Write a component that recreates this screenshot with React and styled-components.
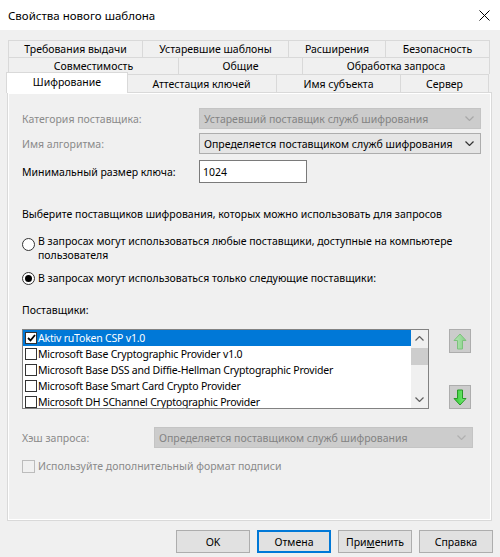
import React from 'react'
import styled, { createGlobalStyle } from 'styled-components'

const GlobalStyle = createGlobalStyle`
  html, body {
    margin: 0;
    padding: 0;
    background: #f0f0f0;
  }
  body {
    font-family: "Noto Sans", "Open Sans", sans-serif;
    font-size: 10.5px;
    color: #000;
  }
  * { box-sizing: border-box; }
`

const Window = styled.div`
  width: 500px;
  height: 557px;
  background: #f0f0f0;
  display: flex;
  flex-direction: column;
  overflow: hidden;
`
const TitleBar = styled.div`
  height: 30px;
  flex-shrink: 0;
  background: #fff;
  display: flex;
  align-items: center;
  justify-content: space-between;
  padding: 0 10px 0 8px;
`
const Caption = styled.span`
  font-size: 11.5px;
`
const TabStrip = styled.div`
  margin-top: 10px;
  display: flex;
  flex-direction: column;
`
const TabRow = styled.div`
  display: flex;
  height: ${p => p.$h}px;
  padding-left: 8px;
`
const Tab = styled.div`
  width: ${p => p.$w}px;
  height: 100%;
  flex-shrink: 0;
  border: 1px solid #d9d9d9;
  border-bottom: none;
  margin-left: -1px;
  display: flex;
  align-items: center;
  justify-content: center;
  white-space: nowrap;
  background: #f0f0f0;
  &:first-child { margin-left: 0; }
`
const ActiveTab = styled(Tab)`
  position: relative;
  z-index: 1;
  width: 122px;
  height: 21px;
  margin-left: -2px;
  margin-top: -2px;
  background: #fff;
  padding-bottom: 3px;
  &:first-child { margin-left: -2px; }
`
const Panel = styled.div`
  margin-left: 7px;
  width: 485px;
  height: 429px;
  border: 1px solid #d9d9d9;
  box-shadow: inset 0 0 0 1px #fff;
  background: #f0f0f0;
  padding: 15px 10px 0 14px;
  display: flex;
  flex-direction: column;
`
const FieldRow = styled.div`
  display: grid;
  grid-template-columns: ${p => p.$label || 177}px auto;
  align-items: center;
  margin-top: ${p => p.$mt || 0}px;
`
const Label = styled.span`
  color: ${p => (p.$disabled ? '#8a8a8a' : '#000')};
  white-space: nowrap;
`
const Combo = styled.div`
  width: ${p => p.$w}px;
  height: 21px;
  display: flex;
  align-items: center;
  justify-content: space-between;
  padding: 0 6px 0 4px;
  border: 1px solid ${p => (p.$disabled ? '#c4c4c4' : '#adadad')};
  background: ${p => (p.$disabled ? '#cccccc' : '#e5e5e5')};
  color: ${p => (p.$disabled ? '#838383' : '#000')};
  white-space: nowrap;
`
const TextInput = styled.div`
  width: 108px;
  height: 23px;
  border: 1px solid #7a7a7a;
  background: #fff;
  padding: 0 3px;
  display: flex;
  align-items: center;
`
const Paragraph = styled.div`
  margin-top: ${p => p.$mt || 0}px;
  line-height: 15px;
  white-space: nowrap;
`
const RadioRow = styled.div`
  display: flex;
  align-items: flex-start;
  margin-top: ${p => p.$mt || 0}px;
  line-height: 14px;
  white-space: nowrap;
`
const RadioCircle = styled.span`
  width: 13px;
  height: 13px;
  flex-shrink: 0;
  margin-top: ${p => (p.$multi ? 4 : 1)}px;
  border-radius: 50%;
  border: 1px solid #333;
  background: #fff;
  margin-right: 3px;
  display: flex;
  align-items: center;
  justify-content: center;
  &::after {
    content: '';
    width: 7px;
    height: 7px;
    border-radius: 50%;
    background: ${p => (p.$checked ? '#000' : 'transparent')};
  }
`
const ListArea = styled.div`
  display: flex;
  align-items: flex-start;
  margin-top: 11px;
`
const ListBox = styled.div`
  width: 407px;
  height: 80px;
  border: 1px solid #828282;
  background: #fff;
  display: flex;
  overflow: hidden;
`
const ListRows = styled.div`
  flex: 1;
  display: flex;
  flex-direction: column;
  font-size: 10.5px;
  letter-spacing: -0.2px;
`
const ListRow = styled.div`
  height: 16px;
  flex-shrink: 0;
  display: flex;
  align-items: center;
  padding-left: 2px;
  white-space: nowrap;
  background: ${p => (p.$selected ? '#0078d7' : '#fff')};
  color: ${p => (p.$selected ? '#fff' : '#000')};
`
const CheckBox = styled.span`
  width: ${p => p.$size || 12}px;
  height: ${p => p.$size || 12}px;
  flex-shrink: 0;
  border: 1px solid ${p => (p.$disabled ? '#bcbcbc' : '#333')};
  background: ${p => (p.$disabled ? '#f0f0f0' : '#fff')};
  margin-right: ${p => p.$gap || 1}px;
  display: flex;
  align-items: center;
  justify-content: center;
`
const ScrollBar = styled.div`
  width: 17px;
  background: #f0f0f0;
  display: flex;
  flex-direction: column;
  align-items: center;
`
const ScrollArrow = styled.div`
  height: 17px;
  width: 17px;
  display: flex;
  align-items: center;
  justify-content: center;
`
const Thumb = styled.div`
  width: 17px;
  height: 17px;
  margin-top: 1px;
  background: #cdcdcd;
`
const ScrollTrack = styled.div`
  flex: 1;
`
const MoveButtons = styled.div`
  margin-left: 20px;
  display: flex;
  flex-direction: column;
  gap: 32px;
`
const MoveButton = styled.div`
  width: 22px;
  height: 24px;
  background: #cccccc;
  border: 1px solid #adadad;
  display: flex;
  align-items: center;
  justify-content: center;
`
const CheckRow = styled.div`
  display: flex;
  align-items: center;
  margin-top: ${p => p.$mt || 0}px;
  color: #8a8a8a;
  line-height: 15px;
`
const ButtonBar = styled.div`
  display: flex;
  justify-content: flex-end;
  gap: 7px;
  padding: 9px 7px 0 0;
`
const Button = styled.div`
  width: 74px;
  height: 23px;
  display: flex;
  align-items: center;
  justify-content: center;
  background: #e1e1e1;
  border: 1px solid ${p => (p.$focused ? '#0078d7' : '#adadad')};
  box-shadow: ${p => (p.$focused ? 'inset 0 0 0 1px #0078d7' : 'none')};
`

const Chevron = ({ up, color = '#333' }) => (
  <svg width="9" height="5" viewBox="0 0 9 5">
    <polyline
      points={up ? '0.5,4.5 4.5,0.5 8.5,4.5' : '0.5,0.5 4.5,4.5 8.5,0.5'}
      fill="none"
      stroke={color}
      strokeWidth="1.2"
    />
  </svg>
)

const Arrow = ({ down, disabled }) => (
  <svg width="14" height="17" viewBox="0 0 14 17">
    <defs>
      <linearGradient id={down ? 'gd' : 'gu'} x1="0" y1="0" x2="1" y2="0">
        <stop offset="0" stopColor={disabled ? '#b6e6b6' : '#7ef07e'} />
        <stop offset="1" stopColor={disabled ? '#86d086' : '#2fc52f'} />
      </linearGradient>
    </defs>
    <path
      d="M7 1 L13 7.5 L9.5 7.5 L9.5 16 L4.5 16 L4.5 7.5 L1 7.5 Z"
      transform={down ? 'rotate(180 7 8.5)' : undefined}
      fill={`url(#${down ? 'gd' : 'gu'})`}
      stroke={disabled ? '#7cc27c' : '#279a27'}
      strokeWidth="1"
      strokeLinejoin="round"
    />
  </svg>
)

const providers = [
  'Aktiv ruToken CSP v1.0',
  'Microsoft Base Cryptographic Provider v1.0',
  'Microsoft Base DSS and Diffie-Hellman Cryptographic Provider',
  'Microsoft Base Smart Card Crypto Provider',
  'Microsoft DH SChannel Cryptographic Provider',
]

const App = () => (
  <Window>
    <GlobalStyle />
    <TitleBar>
      <Caption>Свойства нового шаблона</Caption>
      <svg width="11" height="11" viewBox="0 0 11 11">
        <path d="M0.5 0.5 L10.5 10.5 M10.5 0.5 L0.5 10.5" stroke="#000" strokeWidth="1" />
      </svg>
    </TitleBar>

    <TabStrip>
      <TabRow $h={17}>
        <Tab $w={135}>Требования выдачи</Tab>
        <Tab $w={147}>Устаревшие шаблоны</Tab>
        <Tab $w={98}>Расширения</Tab>
        <Tab $w={105}>Безопасность</Tab>
      </TabRow>
      <TabRow $h={17}>
        <Tab $w={171}>Совместимость</Tab>
        <Tab $w={125}>Общие</Tab>
        <Tab $w={188}>Обработка запроса</Tab>
      </TabRow>
      <TabRow $h={18}>
        <ActiveTab>Шифрование</ActiveTab>
        <Tab $w={151} style={{ marginLeft: -2 }}>Аттестация ключей</Tab>
        <Tab $w={125}>Имя субъекта</Tab>
        <Tab $w={89}>Сервер</Tab>
      </TabRow>
    </TabStrip>

    <Panel>
      <FieldRow>
        <Label $disabled>Категория поставщика:</Label>
        <Combo $w={282} $disabled>
          Устаревший поставщик служб шифрования
          <Chevron color="#a8a8a8" />
        </Combo>
      </FieldRow>
      <FieldRow $mt={4}>
        <Label $disabled>Имя алгоритма:</Label>
        <Combo $w={282}>
          Определяется поставщиком служб шифрования
          <Chevron />
        </Combo>
      </FieldRow>
      <FieldRow $mt={6}>
        <Label>Минимальный размер ключа:</Label>
        <TextInput>1024</TextInput>
      </FieldRow>

      <Paragraph $mt={24}>
        Выберите поставщиков шифрования, которых можно использовать для запросов
      </Paragraph>

      <RadioRow $mt={12}>
        <RadioCircle $multi />
        <span>
          В запросах могут использоваться любые поставщики, доступные на компьютере
          <br />
          пользователя
        </span>
      </RadioRow>
      <RadioRow $mt={9}>
        <RadioCircle $checked />
        <span>В запросах могут использоваться только следующие поставщики:</span>
      </RadioRow>

      <Paragraph $mt={18}>Поставщики:</Paragraph>

      <ListArea>
        <ListBox>
          <ListRows>
            {providers.map((name, i) => (
              <ListRow key={name} $selected={i === 0}>
                <CheckBox>
                  {i === 0 && (
                    <svg width="9" height="8" viewBox="0 0 9 8">
                      <path d="M1 4 L3.5 6.5 L8 1" fill="none" stroke="#000" strokeWidth="1.8" />
                    </svg>
                  )}
                </CheckBox>
                {name}
              </ListRow>
            ))}
          </ListRows>
          <ScrollBar>
            <ScrollArrow>
              <Chevron up color="#606060" />
            </ScrollArrow>
            <Thumb />
            <ScrollTrack />
            <ScrollArrow>
              <Chevron color="#606060" />
            </ScrollArrow>
          </ScrollBar>
        </ListBox>
        <MoveButtons>
          <MoveButton>
            <Arrow disabled />
          </MoveButton>
          <MoveButton>
            <Arrow down />
          </MoveButton>
        </MoveButtons>
      </ListArea>

      <FieldRow $label={132} $mt={18}>
        <Label $disabled>Хэш запроса:</Label>
        <Combo $w={319} $disabled>
          Определяется поставщиком служб шифрования
          <Chevron color="#b0b0b0" />
        </Combo>
      </FieldRow>

      <CheckRow $mt={11}>
        <CheckBox $disabled $size={13} $gap={3} />
        Используйте дополнительный формат подписи
      </CheckRow>
    </Panel>

    <ButtonBar>
      <Button>OK</Button>
      <Button $focused>Отмена</Button>
      <Button>
        <span>
          При<u>м</u>енить
        </span>
      </Button>
      <Button>Справка</Button>
    </ButtonBar>
  </Window>
)

export default App
